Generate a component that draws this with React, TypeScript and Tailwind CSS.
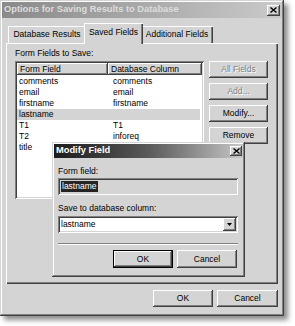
import React from 'react';

const raised = "shadow-[inset_-1px_-1px_#404040,inset_1px_1px_#ffffff,inset_-2px_-2px_#808080]";
const sunken = "shadow-[inset_1px_1px_#808080,inset_-1px_-1px_#ffffff,inset_2px_2px_#404040,inset_-2px_-2px_#d4d4d4]";
const defaultRaised = "shadow-[inset_0_0_0_1px_#000000,inset_-2px_-2px_#404040,inset_2px_2px_#ffffff,inset_-3px_-3px_#808080]";

const rows = [
  { field: 'comments', column: 'comments' },
  { field: 'email', column: 'email' },
  { field: 'firstname', column: 'firstname' },
  { field: 'lastname', column: '', selected: true },
  { field: 'T1', column: 'T1' },
  { field: 'T2', column: 'inforeq' },
  { field: 'title', column: 'title' },
];

function Button({
  label,
  disabled,
  isDefault,
  className = '',
}: {
  label: string;
  disabled?: boolean;
  isDefault?: boolean;
  className?: string;
}) {
  return (
    <div
      className={`flex items-center justify-center bg-[#d4d4d4] text-[8.5px] leading-none ${isDefault ? defaultRaised : raised} ${className}`}
    >
      <span className={disabled ? 'text-[#808080] [text-shadow:1px_1px_#ffffff]' : 'text-black'}>{label}</span>
    </div>
  );
}

function CloseBox({ className = '' }: { className?: string }) {
  return (
    <div className={`flex items-center justify-center bg-[#d4d4d4] ${raised} ${className}`}>
      <svg width="7" height="6" viewBox="0 0 7 6">
        <path d="M0.5 0.5 L6.5 5.5 M6.5 0.5 L0.5 5.5" stroke="#000" strokeWidth="1.4" fill="none" />
      </svg>
    </div>
  );
}

function Tab({ label, selected, className = '' }: { label: string; selected?: boolean; className?: string }) {
  return (
    <div
      className={`flex items-center justify-center bg-[#d4d4d4] text-[8.5px] leading-none shadow-[inset_1px_1px_#ffffff,inset_-1px_0_#404040,inset_-2px_0_#808080] ${
        selected ? 'relative z-10 h-[21px] -mb-[1px] -mx-[2px] pb-[3px]' : 'h-[17px]'
      } ${className}`}
    >
      {label}
    </div>
  );
}

function ModifyField() {
  return (
    <div
      className={`absolute left-[52px] top-[142px] w-[193px] h-[135px] bg-[#d4d4d4] p-[2px] flex flex-col shadow-[inset_-1px_-1px_#404040,inset_1px_1px_#d4d4d4,inset_-2px_-2px_#808080,inset_2px_2px_#ffffff]`}
    >
      <div className="h-[14px] flex items-center pl-[2px] bg-gradient-to-r from-[#1c1c1c] via-[#5a5a5a] to-[#c8c8c8]">
        <span className="text-white font-bold text-[9.3px] leading-none">Modify Field</span>
        <CloseBox className="ml-auto mr-[1px] w-[12px] h-[10px]" />
      </div>
      <div className="pl-[4px] pr-[5px] flex flex-col">
        <div className="mt-[8px] h-[11px] text-[8.5px] leading-[11px]">Form field:</div>
        <div className={`mt-[1px] h-[17px] bg-[#d4d4d4] ${sunken} flex items-center pl-[3px]`}>
          <span className="bg-[#242424] text-white text-[8.5px] leading-[11px] px-[1px]">lastname</span>
        </div>
        <div className="mt-[8px] h-[11px] text-[8.5px] leading-[11px]">Save to database column:</div>
        <div className={`mt-[2px] h-[17px] bg-white ${sunken} flex items-center pl-[3px] pr-[2px]`}>
          <span className="text-[8.5px] leading-none">lastname</span>
          <div className={`ml-auto w-[13px] h-[13px] flex items-center justify-center bg-[#d4d4d4] ${raised}`}>
            <svg width="5" height="3" viewBox="0 0 5 3">
              <path d="M0 0 H5 L2.5 3 Z" fill="#000" />
            </svg>
          </div>
        </div>
        <div className="mt-[10px] h-[2px] border-t border-t-[#808080] border-b border-b-white" />
        <div className="mt-[5px] flex justify-end gap-[4px] mr-[1px]">
          <Button label="OK" isDefault className="w-[60px] h-[18px]" />
          <Button label="Cancel" className="w-[60px] h-[18px]" />
        </div>
      </div>
    </div>
  );
}

export default function App() {
  return (
    <div className="relative w-[295px] h-[326px] bg-white text-black font-['Liberation_Sans',Arial,sans-serif] overflow-hidden">
      <div className="w-[284px] h-[316px] bg-[#d4d4d4] p-[2px] flex flex-col shadow-[inset_-1px_-1px_#404040,inset_1px_1px_#d4d4d4,inset_-2px_-2px_#808080,inset_2px_2px_#ffffff,4px_4px_5px_rgba(0,0,0,0.45)]">
        <div className="h-[16px] flex items-center pl-[2px] bg-gradient-to-r from-[#8a8a8a] to-[#cacaca]">
          <span className="text-[#dedede] font-bold text-[9.3px] leading-none">Options for Saving Results to Database</span>
          <CloseBox className="ml-auto mr-[2px] w-[13px] h-[11px]" />
        </div>

        <div className="mt-[5px] ml-[6px] flex items-end">
          <Tab label="Database Results" className="w-[78px]" />
          <Tab label="Saved Fields" selected className="w-[59px]" />
          <Tab label="Additional Fields" className="w-[72px]" />
        </div>

        <div className="mx-[4px] h-[241px] pl-[9px] pt-[5px] shadow-[inset_1px_1px_#ffffff,inset_-1px_-1px_#404040,inset_-2px_-2px_#808080]">
          <div className="h-[11px] text-[8.5px] leading-[11px]">Form Fields to Save:</div>
          <div className="mt-[2px] flex">
            <div className={`w-[189px] h-[138px] bg-white p-[2px] ${sunken}`}>
              <div className="grid grid-cols-[91px_1fr] h-[12px] text-[8.5px] leading-none">
                <div className={`flex items-center pl-[3px] bg-[#d4d4d4] ${raised}`}>Form Field</div>
                <div className={`flex items-center pl-[3px] bg-[#d4d4d4] ${raised}`}>Database Column</div>
              </div>
              <div className="mt-[1px] pr-[2px]">
                {rows.map((r) => (
                  <div
                    key={r.field}
                    className={`grid grid-cols-[91px_1fr] h-[11px] text-[8.5px] leading-[11px] ${r.selected ? 'bg-[#d4d4d4]' : ''}`}
                  >
                    <div className="pl-[2px]">{r.field}</div>
                    <div className="pl-[5px]">{r.column}</div>
                  </div>
                ))}
              </div>
            </div>
            <div className="ml-[5px] w-[59px] flex flex-col gap-[5px]">
              <Button label="All Fields" disabled className="h-[17px]" />
              <Button label="Add..." disabled className="h-[17px]" />
              <Button label="Modify..." className="h-[17px]" />
              <Button label="Remove" className="h-[17px]" />
            </div>
          </div>
        </div>

        <div className="mt-[6px] mr-[4px] flex justify-end gap-[4px]">
          <Button label="OK" className="w-[60px] h-[17px]" />
          <Button label="Cancel" className="w-[61px] h-[17px]" />
        </div>
      </div>

      <ModifyField />
    </div>
  );
}
